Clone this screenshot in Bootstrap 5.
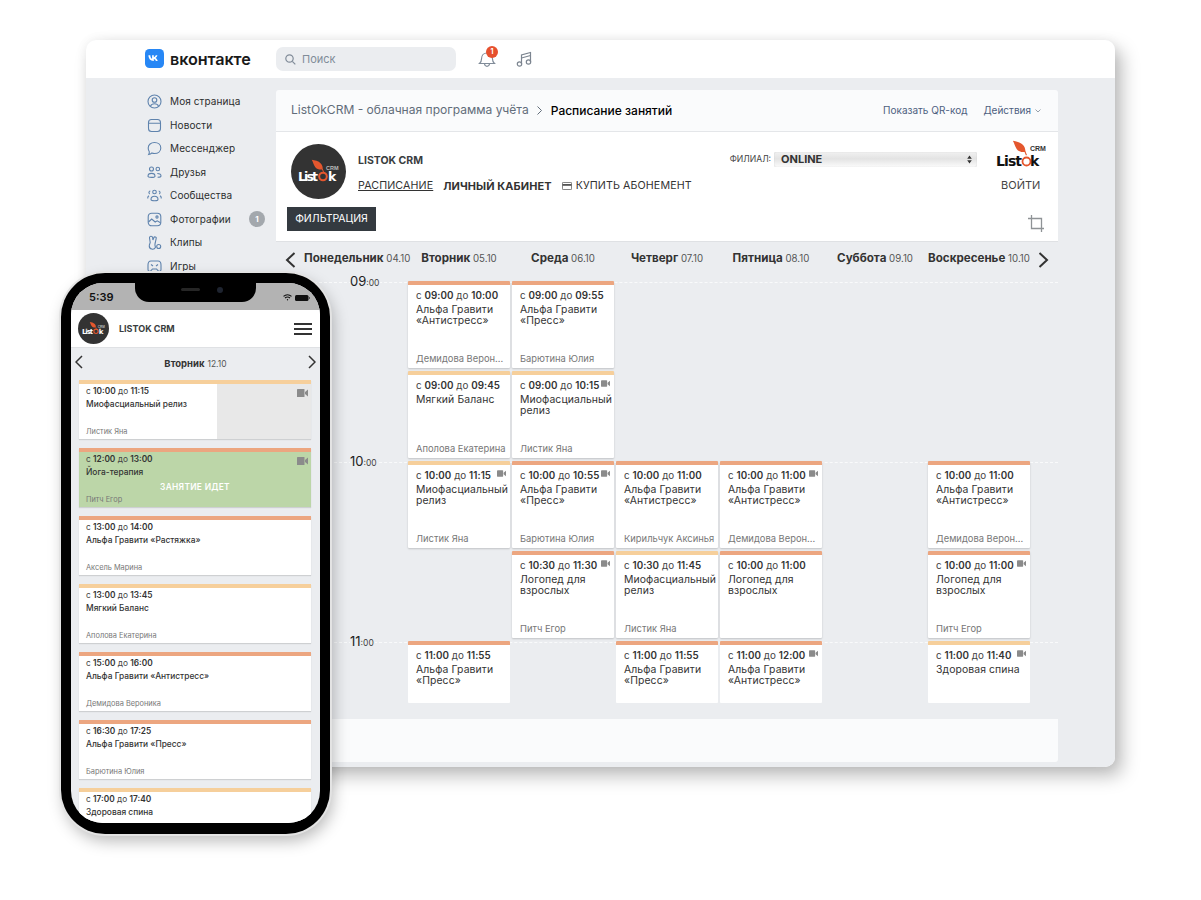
<!DOCTYPE html>
<html lang="ru">
<head>
<meta charset="utf-8">
<title>ListOk CRM</title>
<link href="https://cdn.jsdelivr.net/npm/bootstrap@5.3.0/dist/css/bootstrap.min.css" rel="stylesheet">
<style>
html,body{height:100%;}
body{background:#fff;font-family:Inter,Roboto,"Liberation Sans",sans-serif;color:#2c2d2e;overflow:hidden;font-size:11px;}
.stage{position:relative;width:1201px;height:900px;overflow:hidden;}
.win{position:absolute;left:86px;top:40px;width:1029px;height:727px;background:#ebedf0;border-radius:10px;overflow:hidden;}
.win-shadow{position:absolute;left:86px;top:40px;width:1029px;height:727px;border-radius:10px;box-shadow:7px 9px 18px rgba(0,0,0,.26),0 0 12px rgba(0,0,0,.06);}
.vk-top{height:38px;background:#fff;padding-left:59px;}
.vk-brand{width:131px;gap:6px;font-size:16.2px;font-weight:600;color:#1a1a1a;letter-spacing:-.1px;}
.vk-search{width:180px;height:24px;background:#ebedf0;border-radius:7px;color:#818c99;font-size:11px;gap:6px;padding-left:9px;}
.vk-icons{padding-left:22px;gap:19px;}
.bell-wrap{position:relative;width:18px;height:18px;}
.bell-badge{position:absolute;left:8px;top:-4px;width:12px;height:12px;border-radius:50%;background:#e6502e;color:#fff;font-size:7px;font-weight:700;line-height:12px;text-align:center;}
.vk-body{padding-left:59px;padding-top:12px;gap:11px;}
.side{width:120px;flex:none;}
.side-item{height:23.5px;gap:8px;font-size:10px;color:#2c2d2e;position:relative;padding-left:2px;letter-spacing:.1px;}
.side-badge{margin-left:auto;width:16px;height:16px;border-radius:50%;background:#a3a8ad;color:#fff;font-size:8px;font-weight:700;line-height:16px;text-align:center;}
.main-col{width:782px;flex:none;}
.crumbs{height:42px;background:#fafbfc;padding:0 17px 0 15px;border-bottom:1px solid #e4e6e9;border-radius:3px 3px 0 0;}
.crumb-a{font-size:12.05px;color:#626d7a;}
.crumb-b{font-size:12px;color:#000;font-weight:500;}
.crumb-sep{margin:0 9px 0 8px;}
.crumb-r{font-size:10px;color:#4d6080;gap:16px;}
.top-panel{height:110px;background:#fff;border-bottom:1px solid #dfe1e4;position:relative;}
.panel-row{padding:12px 12px 0 15px;height:67px;}
.logo-round{width:55px;height:55px;flex:none;}
.head-mid{padding-left:12px;}
.brand-name{font-size:10.5px;font-weight:700;color:#3a3d40;line-height:12px;margin-top:11px;}
.menu-row{margin-top:12px;gap:10px;font-size:10.7px;color:#333;line-height:14px;letter-spacing:.1px;}
.menu-active{text-decoration:underline;}
.menu-strong{font-weight:700;font-size:10.95px;}
.branch-wrap{width:247px;margin-left:38px;padding-top:8px;gap:3px;align-items:flex-start;}
.branch-lbl{font-size:8.6px;color:#444;line-height:15px;white-space:nowrap;}
.branch-sel{width:203px;height:15px;border-radius:2px;background:linear-gradient(#f1f1f1,#e3e3e3 45%,#fbfbfb);box-shadow:inset 0 0 1px rgba(0,0,0,.25);font-size:11px;font-weight:700;color:#333;line-height:15px;padding:0 5px 0 7px;}
.login-col{width:52px;margin-left:18px;margin-top:-6px;}
.login-txt{font-size:11px;color:#444;text-align:center;margin-top:6px;}
.btn-filter{--bs-btn-bg:#343a40;--bs-btn-color:#fff;--bs-btn-border-color:#343a40;--bs-btn-hover-bg:#343a40;--bs-btn-hover-color:#fff;--bs-btn-border-radius:0;--bs-btn-font-size:10.5px;--bs-btn-padding-x:0;--bs-btn-padding-y:0;width:89px;height:24px;margin:8px 0 0 11px;display:block;}
.crop-ico{position:absolute;right:13px;bottom:8px;}
.day-row{height:39px;position:relative;padding-left:28px;padding-bottom:5px;}
.day-cell{width:104px;text-align:center;font-size:11.6px;font-weight:700;color:#333;white-space:nowrap;padding-right:2px;}
.day-cell span{font-weight:400;font-size:9.7px;color:#555;}
.chev-l{position:absolute;left:9px;top:10px;}
.chev-r{position:absolute;right:9px;top:10px;}
.hour{position:relative;}
.hour::before{content:"";position:absolute;left:28px;right:0;top:1px;border-top:1px dashed #f9fafb;}
.cells{position:relative;display:grid;grid-template-columns:repeat(7,104px);grid-auto-rows:90px;margin-left:28px;}
.hour-cut .cells{grid-auto-rows:62px;}
.hour-lbl{justify-self:start;align-self:start;margin:-8px 0 0 46px;background:#ebedf0;font-size:13px;color:#222;line-height:16px;padding-right:1px;}
.hour-lbl span{font-size:8.5px;color:#444;}
.sess{position:relative;width:102px;height:87px;background:#fff;border-top:4px solid #eca680;box-shadow:0 1px 2px rgba(0,0,0,.18);padding:4px 0 0 8px;border-radius:1px;overflow:hidden;}
.hour-cut .sess{height:62px;box-shadow:none;}
.sess-soft{border-top-color:#f6cf9b;}
.sess-time{font-size:9.8px;line-height:13px;color:#444;white-space:nowrap;letter-spacing:.05px;}
.sess-time b{font-weight:600;color:#333;}
.sess-title{font-size:10.4px;line-height:11px;margin-top:2px;color:#333;white-space:nowrap;letter-spacing:.1px;}
.sess-who{position:absolute;left:8px;right:2px;bottom:3px;font-size:9.4px;line-height:12px;color:#777;white-space:nowrap;}
.cam{position:absolute;right:4px;top:5px;width:9px;height:7px;}
.foot-panel{height:43px;background:#fafbfc;margin-top:16px;border-radius:0 0 3px 3px;}
.phone{position:absolute;left:61px;top:273px;width:269px;height:561px;background:#000;border-radius:44px;padding:10px 10px 11px 10px;box-shadow:0 0 0 2px #e3e3e3,3px 7px 16px rgba(0,0,0,.28);}
.screen{position:relative;height:100%;background:#ebedf0;border-radius:32px;overflow:hidden;}
.notch{position:absolute;left:64px;top:0;width:121px;height:19px;background:#000;border-radius:0 0 14px 14px;}
.speaker{position:absolute;left:46px;top:5px;width:19px;height:3px;border-radius:2px;background:#262626;}
.lens{position:absolute;left:82px;top:4px;width:6px;height:6px;border-radius:50%;background:#1e2430;}
.status{height:27px;flex:none;background:#b3b3b3;padding:2px 10px 0 18px;font-size:11px;font-weight:600;color:#111;}
.status-r{gap:3px;}
.ph-head{height:38px;flex:none;background:#fff;border-bottom:1px solid #dfe1e4;padding:0 8px 0 7px;}
.ph-name{font-size:9px;font-weight:700;color:#3a3d40;padding-left:10px;}
.burger{width:18px;margin-left:auto;}
.burger i{display:block;height:2px;background:#333;margin:3px 0;}
.ph-day{height:32px;flex:none;position:relative;font-size:9.5px;font-weight:700;color:#333;}
.ph-day span{font-weight:400;font-size:8.5px;color:#555;padding-left:3px;}
.ph-l{position:absolute;left:4px;top:7px;}
.ph-r{position:absolute;right:4px;top:7px;}
.ph-list{padding:0 9px 0 8px;gap:9px;}
.ph-card{position:relative;flex:none;height:59px;background:#fff;border-top:4px solid #eca680;box-shadow:0 1px 1px rgba(0,0,0,.12);padding:2px 0 0 7px;overflow:hidden;}
.ph-soft{border-top-color:#f6cf9b;}
.ph-green{background:#bcd6a8;}
.ph-shade{position:absolute;left:138px;right:0;top:0;bottom:0;background:#e8e8e8;}
.ph-time{position:relative;font-size:8.3px;line-height:11px;color:#444;}
.ph-time b{font-weight:600;color:#333;}
.ph-title{position:relative;font-size:8.4px;line-height:11px;margin-top:2px;color:#333;font-weight:500;}
.ph-who{position:absolute;left:7px;bottom:2px;font-size:7.4px;line-height:10px;color:#777;}
.ph-live{position:absolute;left:0;right:0;top:30px;text-align:center;color:#fff;font-size:8.4px;font-weight:600;letter-spacing:.3px;line-height:11px;}
.ph-cam{position:absolute;right:3px;top:5px;width:11px;height:8px;}
</style>
</head>
<body>
<svg width="0" height="0" class="position-absolute">
  <defs>
    <symbol id="cam" viewBox="0 0 11 8"><rect x="0" y="0" width="7.500" height="8" rx=".6" fill="#8b8b8b"/><path d="M8 3l3-2.400v6.800L8 5z" fill="#8b8b8b"/></symbol>
    <symbol id="leaf" viewBox="0 0 20 20"><path d="M1 1c4 .5 9 1.500 12 5 2 2.300 3 5 2.500 8-4 .5-8-.5-10-3.500C3.500 8 2.800 4 1 1z" fill="#e4572e"/><path d="M15 13l2 5" stroke="#e4572e" stroke-width="1.300" fill="none"/></symbol>
  </defs>
</svg>
<div class="stage">
  <div class="win-shadow"></div>
  <div class="win">
    <div class="vk-top d-flex align-items-center">
      <div class="vk-brand d-flex align-items-center">
        <svg width="19" height="19" viewBox="0 0 19 19"><rect width="19" height="19" rx="4.500" fill="#2787f5"/><path d="M3.400 6.200h1.900c.1 2.300 1 3.300 1.800 3.500V6.200h1.700v2c.8-.1 1.600-1 1.900-2h1.700c-.3 1.300-1.200 2.300-1.900 2.700.7.300 1.800 1.200 2.200 3h-1.900c-.3-1-1.100-1.700-2-1.800v1.800H8.600c-3.200 0-5-2.200-5.200-5.700z" fill="#fff"/></svg>
        <span>вконтакте</span>
      </div>
      <div class="vk-search d-flex align-items-center">
        <svg width="11" height="11" viewBox="0 0 11 11" fill="none" stroke="#818c99" stroke-width="1.200"><circle cx="4.500" cy="4.500" r="3.700"/><path d="M7.300 7.300l3 3"/></svg>
        <span>Поиск</span>
      </div>
      <div class="vk-icons d-flex align-items-center">
        <div class="bell-wrap">
          <svg width="18" height="18" viewBox="0 0 18 18" fill="none" stroke="#818c99" stroke-width="1.200"><path d="M1.500 13.500c1.300-1 2-2 2-4.500 0-3.500 2.300-6 5.500-6s5.500 2.500 5.500 6c0 2.500.7 3.500 2 4.500z"/><path d="M6.500 14c.3 1.500 1.300 2.300 2.500 2.300s2.200-.8 2.500-2.300"/></svg>
          <div class="bell-badge">1</div>
        </div>
        <svg width="18" height="18" viewBox="0 0 18 18" fill="none" stroke="#7c8590" stroke-width="1.200"><path d="M6.500 14V5l9-2.500V12"/><circle cx="4.500" cy="14" r="2.200"/><circle cx="13.500" cy="12" r="2.200"/><path d="M6.500 8l9-2.500"/></svg>
      </div>
    </div>
    <div class="vk-body d-flex">
      <div class="side">
        <div class="side-item d-flex align-items-center"><svg width="15" height="15" viewBox="0 0 15 15" fill="none" stroke="#5f83ad" stroke-width="1.100"><circle cx="7.500" cy="7.500" r="6.500"/><circle cx="7.500" cy="6" r="2.300"/><path d="M3.500 12c.7-1.700 2.200-2.300 4-2.300s3.300.6 4 2.300"/></svg><span>Моя страница</span></div>
        <div class="side-item d-flex align-items-center"><svg width="15" height="15" viewBox="0 0 15 15" fill="none" stroke="#5f83ad" stroke-width="1.100"><rect x="1.500" y="1.500" width="12" height="12" rx="3"/><path d="M1.500 5.300h12"/></svg><span>Новости</span></div>
        <div class="side-item d-flex align-items-center"><svg width="15" height="15" viewBox="0 0 15 15" fill="none" stroke="#5f83ad" stroke-width="1.100"><path d="M1.200 7c0-3.300 2.800-5.500 6.300-5.500s6.300 2.200 6.300 5.500-2.800 5.500-6.300 5.500c-1 0-1.800-.1-2.600-.5-.8.700-2 1.300-3.200 1.500.5-.8.700-1.800.6-2.800C1.600 9.600 1.200 8.400 1.200 7z"/></svg><span>Мессенджер</span></div>
        <div class="side-item d-flex align-items-center"><svg width="15" height="15" viewBox="0 0 15 15" fill="none" stroke="#5f83ad" stroke-width="1.100"><circle cx="4.500" cy="4" r="2"/><circle cx="10.800" cy="4" r="1.800"/><path d="M1 11.200c0-1.800 1.500-2.800 3.500-2.800S8 9.400 8 11.200c0 .8-1 1.200-3.500 1.200S1 12 1 11.200z"/><path d="M10.300 8.500c2 0 3.700.8 3.700 2.500 0 1-1.200 1.300-3.400 1.300"/></svg><span>Друзья</span></div>
        <div class="side-item d-flex align-items-center"><svg width="15" height="15" viewBox="0 0 15 15" fill="none" stroke="#5f83ad" stroke-width="1.100"><circle cx="7.500" cy="4" r="1.800"/><path d="M4 11.500c0-2 1.500-3.200 3.500-3.200s3.500 1.200 3.500 3.200c0 1-1.500 1.300-3.500 1.300S4 12.500 4 11.500z"/><path d="M3.300 3c-1 .2-1.500 1-1.300 2 .1.500.4.800.8 1M11.700 3c1 .2 1.500 1 1.300 2-.1.500-.4.800-.8 1M2 7.800C1 8.300.6 9.200.8 10.500M13 7.800c1 .5 1.400 1.400 1.200 2.700"/></svg><span>Сообщества</span></div>
        <div class="side-item d-flex align-items-center"><svg width="15" height="15" viewBox="0 0 15 15" fill="none" stroke="#5f83ad" stroke-width="1.100"><rect x="1.200" y="1.200" width="12.600" height="12.600" rx="3.500"/><circle cx="10" cy="5" r="1.100"/><path d="M1.500 10l3.200-3 3.500 3 2-1.200 3.300 2"/></svg><span>Фотографии</span><span class="side-badge">1</span></div>
        <div class="side-item d-flex align-items-center"><svg width="15" height="15" viewBox="0 0 15 15" fill="none" stroke="#5f83ad" stroke-width="1.100"><path d="M4 1.200c1 0 1.600.8 1.700 1.800l.2 2 1-2.500c.5-1.200 2.700-.5 2.300.8L8.200 8c-.5 1.800-.3 3 .3 4.200-.7 1.500-2.200 2.300-3.800 1.800C2.800 13.500 2 12 2.400 10l.8-2.500-.7-4.500c-.1-1 .5-1.800 1.500-1.800z"/><circle cx="11.700" cy="11.500" r="2"/></svg><span>Клипы</span></div>
        <div class="side-item d-flex align-items-center"><svg width="15" height="15" viewBox="0 0 15 15" fill="none" stroke="#5f83ad" stroke-width="1.100"><path d="M4 2h7c2 0 3 1.500 3 4v4.500c0 1.800-1.800 2.400-3 1.200L9.500 10h-4L4 11.700c-1.200 1.200-3 .6-3-1.200V6c0-2.500 1-4 3-4z"/><path d="M4 5.500l2 1.500M11 5.500L9 7"/></svg><span>Игры</span></div>
      </div>
      <div class="main-col">
        <div class="crumbs d-flex align-items-center">
          <span class="crumb-a">ListOkCRM - облачная программа учёта</span>
          <svg class="crumb-sep" width="5" height="9" viewBox="0 0 5 9" fill="none" stroke="#626d7a" stroke-width="1"><path d="M.5.5l4 4-4 4"/></svg>
          <span class="crumb-b">Расписание занятий</span>
          <div class="crumb-r d-flex align-items-center ms-auto">
            <span>Показать QR-код</span>
            <span class="d-flex align-items-center gap-1"><span>Действия</span><svg width="6" height="4" viewBox="0 0 6 4" fill="none" stroke="#8b95a1" stroke-width=".9"><path d="M.5.500l2.500 2.500L5.500.5"/></svg></span>
          </div>
        </div>
        <div class="top-panel">
          <div class="panel-row d-flex">
            <svg class="logo-round" viewBox="0 0 55 55">
              <circle cx="27.500" cy="27.500" r="27.500" fill="#333"/>
              <use href="#leaf" x="20" y="15" width="15" height="15"/>
              <text x="7" y="37" font-family="DejaVu Sans,sans-serif" font-weight="700" font-size="12.500" fill="#fff" textLength="20">List</text>
              <circle cx="32" cy="32.500" r="3.800" fill="none" stroke="#e4572e" stroke-width="2"/>
              <text x="37" y="37" font-family="DejaVu Sans,sans-serif" font-weight="700" font-size="12.500" fill="#fff">k</text>
              <text x="35" y="26" font-family="Liberation Sans,sans-serif" font-weight="700" font-size="5.500" fill="#bbb">CRM</text>
            </svg>
            <div class="head-mid flex-shrink-0">
              <div class="brand-name">LISTOK CRM</div>
              <div class="menu-row d-flex align-items-center">
                <span class="menu-active">РАСПИСАНИЕ</span>
                <span class="menu-strong">ЛИЧНЫЙ КАБИНЕТ</span>
                <span class="d-inline-flex align-items-center gap-1"><svg width="10" height="8" viewBox="0 0 10 8"><rect x=".4" y=".4" width="9.200" height="7.200" rx=".8" fill="none" stroke="#555" stroke-width=".8"/><rect x=".5" y="2" width="9" height="1.800" fill="#555"/></svg><span>КУПИТЬ АБОНЕМЕНТ</span></span>
              </div>
            </div>
            <div class="branch-wrap d-flex">
              <span class="branch-lbl">ФИЛИАЛ:</span>
              <div class="branch-sel d-flex align-items-center justify-content-between">
                <span>ONLINE</span>
                <svg width="5" height="9" viewBox="0 0 5 9" fill="#333"><path d="M2.500.5L4.800 3.800H.2zM2.500 8.500L.2 5.200h4.600z"/></svg>
              </div>
            </div>
            <div class="login-col flex-shrink-0">
              <svg width="52" height="33" viewBox="0 0 52 33">
                <use href="#leaf" x="17" y="1" width="17" height="19"/>
                <text x="1" y="28" font-family="DejaVu Sans,sans-serif" font-weight="700" font-size="14" fill="#111" textLength="26">List</text>
                <circle cx="31.500" cy="23.500" r="4" fill="none" stroke="#e4572e" stroke-width="1.800"/>
                <text x="35" y="28" font-family="DejaVu Sans,sans-serif" font-weight="700" font-size="14" fill="#111">k</text>
                <text x="35" y="13" font-family="Liberation Sans,sans-serif" font-weight="700" font-size="7" fill="#333">CRM</text>
              </svg>
              <div class="login-txt">ВОЙТИ</div>
            </div>
          </div>
          <button type="button" class="btn btn-filter">ФИЛЬТРАЦИЯ</button>
          <svg class="crop-ico" width="17" height="18" viewBox="0 0 17 18" fill="none" stroke="#8f9396" stroke-width="1.300"><path d="M3.500 0v13.500H16M0 3.500h13.500V17"/></svg>
        </div>
        <div class="day-row d-flex align-items-center">
          <svg class="chev-l" width="11" height="16" viewBox="0 0 11 16" fill="none" stroke="#333" stroke-width="2"><path d="M9.500 1L2 8l7.500 7"/></svg>
          <div class="day-cell">Понедельник <span>04.10</span></div>
          <div class="day-cell">Вторник <span>05.10</span></div>
          <div class="day-cell">Среда <span>06.10</span></div>
          <div class="day-cell">Четверг <span>07.10</span></div>
          <div class="day-cell">Пятница <span>08.10</span></div>
          <div class="day-cell">Суббота <span>09.10</span></div>
          <div class="day-cell">Воскресенье <span>10.10</span></div>
          <svg class="chev-r" width="11" height="16" viewBox="0 0 11 16" fill="none" stroke="#333" stroke-width="2"><path d="M1.500 1L9 8l-7.500 7"/></svg>
        </div>
        <div class="hour">
          <div class="cells">
            <div class="hour-lbl">09<span>:00</span></div>
            <div class="sess"><div class="sess-time">с <b>09:00</b> до <b>10:00</b></div><div class="sess-title">Альфа Гравити<br>«Антистресс»</div><div class="sess-who">Демидова Верон...</div></div>
            <div class="sess"><div class="sess-time">с <b>09:00</b> до <b>09:55</b></div><div class="sess-title">Альфа Гравити<br>«Пресс»</div><div class="sess-who">Барютина Юлия</div></div>
            <div></div><div></div><div></div><div></div>
            <div></div>
            <div class="sess sess-soft"><div class="sess-time">с <b>09:00</b> до <b>09:45</b></div><div class="sess-title">Мягкий Баланс</div><div class="sess-who">Аполова Екатерина</div></div>
            <div class="sess sess-soft"><svg class="cam"><use href="#cam"/></svg><div class="sess-time">с <b>09:00</b> до <b>10:15</b></div><div class="sess-title">Миофасциальный<br>релиз</div><div class="sess-who">Листик Яна</div></div>
            <div></div><div></div><div></div><div></div>
          </div>
        </div>
        <div class="hour">
          <div class="cells">
            <div class="hour-lbl">10<span>:00</span></div>
            <div class="sess sess-soft"><svg class="cam"><use href="#cam"/></svg><div class="sess-time">с <b>10:00</b> до <b>11:15</b></div><div class="sess-title">Миофасциальный<br>релиз</div><div class="sess-who">Листик Яна</div></div>
            <div class="sess"><svg class="cam"><use href="#cam"/></svg><div class="sess-time">с <b>10:00</b> до <b>10:55</b></div><div class="sess-title">Альфа Гравити<br>«Пресс»</div><div class="sess-who">Барютина Юлия</div></div>
            <div class="sess"><div class="sess-time">с <b>10:00</b> до <b>11:00</b></div><div class="sess-title">Альфа Гравити<br>«Антистресс»</div><div class="sess-who">Кирильчук Аксинья</div></div>
            <div class="sess"><svg class="cam"><use href="#cam"/></svg><div class="sess-time">с <b>10:00</b> до <b>11:00</b></div><div class="sess-title">Альфа Гравити<br>«Антистресс»</div><div class="sess-who">Демидова Верон...</div></div>
            <div></div>
            <div class="sess"><div class="sess-time">с <b>10:00</b> до <b>11:00</b></div><div class="sess-title">Альфа Гравити<br>«Антистресс»</div><div class="sess-who">Демидова Верон...</div></div>
            <div></div><div></div>
            <div class="sess"><svg class="cam"><use href="#cam"/></svg><div class="sess-time">с <b>10:30</b> до <b>11:30</b></div><div class="sess-title">Логопед для<br>взрослых</div><div class="sess-who">Питч Егор</div></div>
            <div class="sess sess-soft"><div class="sess-time">с <b>10:30</b> до <b>11:45</b></div><div class="sess-title">Миофасциальный<br>релиз</div><div class="sess-who">Листик Яна</div></div>
            <div class="sess"><div class="sess-time">с <b>10:00</b> до <b>11:00</b></div><div class="sess-title">Логопед для<br>взрослых</div></div>
            <div></div>
            <div class="sess"><svg class="cam"><use href="#cam"/></svg><div class="sess-time">с <b>10:00</b> до <b>11:00</b></div><div class="sess-title">Логопед для<br>взрослых</div><div class="sess-who">Питч Егор</div></div>
          </div>
        </div>
        <div class="hour hour-cut">
          <div class="cells">
            <div class="hour-lbl">11<span>:00</span></div>
            <div class="sess"><div class="sess-time">с <b>11:00</b> до <b>11:55</b></div><div class="sess-title">Альфа Гравити<br>«Пресс»</div></div>
            <div></div>
            <div class="sess"><div class="sess-time">с <b>11:00</b> до <b>11:55</b></div><div class="sess-title">Альфа Гравити<br>«Пресс»</div></div>
            <div class="sess"><svg class="cam"><use href="#cam"/></svg><div class="sess-time">с <b>11:00</b> до <b>12:00</b></div><div class="sess-title">Альфа Гравити<br>«Антистресс»</div></div>
            <div></div>
            <div class="sess sess-soft"><svg class="cam"><use href="#cam"/></svg><div class="sess-time">с <b>11:00</b> до <b>11:40</b></div><div class="sess-title">Здоровая спина</div></div>
          </div>
        </div>
        <div class="foot-panel"></div>
      </div>
    </div>
  </div>

  <div class="phone">
    <div class="screen d-flex flex-column">
      <div class="status d-flex align-items-center justify-content-between">
        <span>5:39</span>
        <span class="status-r d-flex align-items-center">
          <svg width="9" height="7" viewBox="0 0 9 7" fill="none" stroke="#111" stroke-width="1.100"><path d="M.5 2.300c2.300-2 5.700-2 8 0M2 4c1.400-1.100 3.600-1.100 5 0"/><circle cx="4.500" cy="5.700" r=".7" fill="#111" stroke="none"/></svg>
          <svg width="15" height="6" viewBox="0 0 15 6"><rect width="13.500" height="6" rx="1.500" fill="#111"/><rect x="14" y="2" width="1" height="2" fill="#555"/></svg>
        </span>
      </div>
      <div class="notch"><div class="speaker"></div><div class="lens"></div></div>
      <div class="ph-head d-flex align-items-center">
        <svg width="31" height="31" viewBox="0 0 55 55">
          <circle cx="27.500" cy="27.500" r="27.500" fill="#333"/>
          <use href="#leaf" x="20" y="15" width="15" height="15"/>
          <text x="7" y="37" font-family="DejaVu Sans,sans-serif" font-weight="700" font-size="12.500" fill="#fff" textLength="20">List</text>
          <circle cx="32" cy="32.500" r="3.800" fill="none" stroke="#e4572e" stroke-width="2"/>
          <text x="37" y="37" font-family="DejaVu Sans,sans-serif" font-weight="700" font-size="12.500" fill="#fff">k</text>
          <text x="35" y="26" font-family="Liberation Sans,sans-serif" font-weight="700" font-size="5.500" fill="#bbb">CRM</text>
        </svg>
        <span class="ph-name">LISTOK CRM</span>
        <div class="burger"><i></i><i></i><i></i></div>
      </div>
      <div class="ph-day d-flex align-items-center justify-content-center">
        <svg class="ph-l" width="8" height="14" viewBox="0 0 8 14" fill="none" stroke="#333" stroke-width="1.500"><path d="M7 1L1 7l6 6"/></svg>
        <div>Вторник<span>12.10</span></div>
        <svg class="ph-r" width="8" height="14" viewBox="0 0 8 14" fill="none" stroke="#333" stroke-width="1.500"><path d="M1 1l6 6-6 6"/></svg>
      </div>
      <div class="ph-list d-flex flex-column">
        <div class="ph-card ph-soft"><div class="ph-shade"></div><svg class="ph-cam"><use href="#cam"/></svg><div class="ph-time">с <b>10:00</b> до <b>11:15</b></div><div class="ph-title">Миофасциальный релиз</div><div class="ph-who">Листик Яна</div></div>
        <div class="ph-card ph-green"><svg class="ph-cam"><use href="#cam"/></svg><div class="ph-time">с <b>12:00</b> до <b>13:00</b></div><div class="ph-title">Йога-терапия</div><div class="ph-live">ЗАНЯТИЕ ИДЕТ</div><div class="ph-who">Питч Егор</div></div>
        <div class="ph-card"><div class="ph-time">с <b>13:00</b> до <b>14:00</b></div><div class="ph-title">Альфа Гравити «Растяжка»</div><div class="ph-who">Аксель Марина</div></div>
        <div class="ph-card ph-soft"><div class="ph-time">с <b>13:00</b> до <b>13:45</b></div><div class="ph-title">Мягкий Баланс</div><div class="ph-who">Аполова Екатерина</div></div>
        <div class="ph-card"><div class="ph-time">с <b>15:00</b> до <b>16:00</b></div><div class="ph-title">Альфа Гравити «Антистресс»</div><div class="ph-who">Демидова Вероника</div></div>
        <div class="ph-card"><div class="ph-time">с <b>16:30</b> до <b>17:25</b></div><div class="ph-title">Альфа Гравити «Пресс»</div><div class="ph-who">Барютина Юлия</div></div>
        <div class="ph-card ph-soft"><div class="ph-time">с <b>17:00</b> до <b>17:40</b></div><div class="ph-title">Здоровая спина</div></div>
      </div>
    </div>
  </div>
</div>
<script src="https://cdn.jsdelivr.net/npm/bootstrap@5.3.0/dist/js/bootstrap.bundle.min.js"></script>
</body>
</html>
